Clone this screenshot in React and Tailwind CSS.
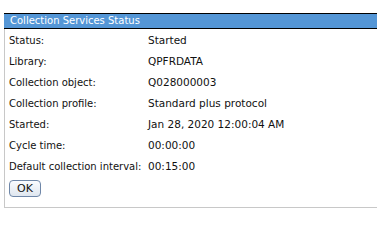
const rows = [
  ["Status:", "Started"],
  ["Library:", "QPFRDATA"],
  ["Collection object:", "Q028000003"],
  ["Collection profile:", "Standard plus protocol"],
  ["Started:", "Jan 28, 2020 12:00:04 AM"],
  ["Cycle time:", "00:00:00"],
  ["Default collection interval:", "00:15:00"],
]

function App() {
  return (
    <div className="bg-white w-[377px] h-[245px] pt-[13px] pl-[4px] font-['DejaVu_Sans',Verdana,sans-serif] text-[10px] text-[#111]">
      <div className="border-l border-b border-[#c8c8c8] h-[195px]">
        <div className="h-[16px] bg-[#5496d6] border-y border-black -ml-px text-white leading-[14px] pl-[6px]">
          Collection Services Status
        </div>
        <div className="pt-[1px] pl-[4px]">
          {rows.map(([label, value]) => (
            <div key={label} className="flex h-[21px] items-center whitespace-nowrap">
              <div className="w-[139px] shrink-0">{label}</div>
              <div className="text-[10.5px]">{value}</div>
            </div>
          ))}
          <button className="mt-[3px] h-[17px] w-[32px] rounded-[4px] border border-[#6f87a8] bg-gradient-to-b from-[#fafcff] to-[#dfe6ef] text-[11px] leading-[15px]">
            OK
          </button>
        </div>
      </div>
    </div>
  )
}

export default App
